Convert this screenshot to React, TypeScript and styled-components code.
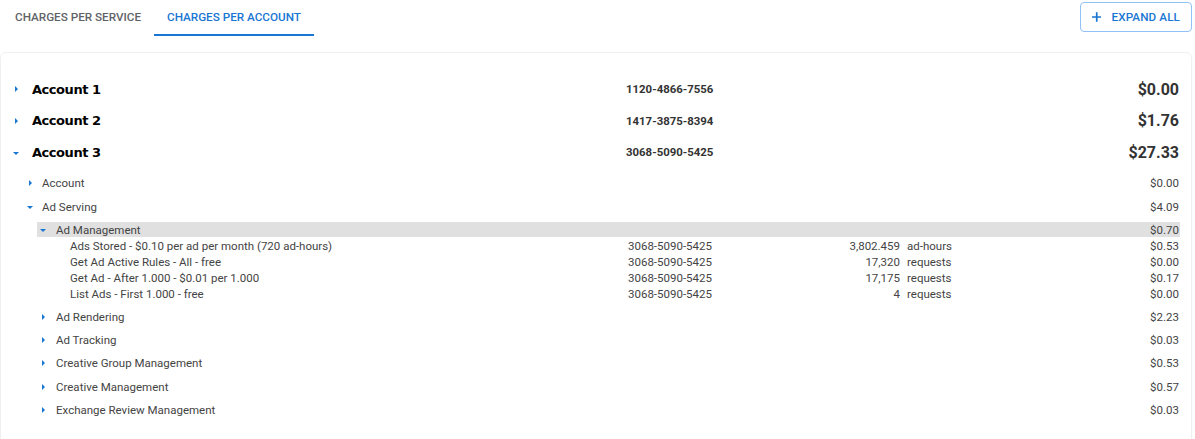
import React from "react";
import styled, { createGlobalStyle } from "styled-components";

const GlobalStyle = createGlobalStyle`
  html, body { margin: 0; padding: 0; background: #fff; }
  body { font-family: Roboto, "Noto Sans", Arial, sans-serif; color: #333; }
  * { box-sizing: border-box; }
`;

const BLUE = "#1976d2";

const Page = styled.div`
  width: 1195px;
  padding-right: 3px;
`;

const Header = styled.div`
  display: flex;
  justify-content: space-between;
  align-items: flex-start;
  height: 36px;
  padding-left: 2px;
`;

const Tabs = styled.div`
  display: flex;
  height: 36px;
`;

const Tab = styled.button<{ $active?: boolean }>`
  all: unset;
  box-sizing: border-box;
  height: 36px;
  padding: 0 13px;
  display: flex;
  align-items: center;
  white-space: nowrap;
  font-family: Roboto, sans-serif;
  font-weight: 500;
  font-size: 11.7px;
  letter-spacing: 0;
  text-transform: uppercase;
  cursor: pointer;
  color: ${(p) => (p.$active ? BLUE : "#5f6368")};
  border-bottom: 2px solid ${(p) => (p.$active ? BLUE : "transparent")};
`;

const ExpandButton = styled.button`
  all: unset;
  box-sizing: border-box;
  margin-top: 2px;
  height: 30px;
  width: 112px;
  display: flex;
  align-items: center;
  gap: 10px;
  padding: 0 11px;
  white-space: nowrap;
  border: 1px solid #90c2f5;
  border-radius: 4px;
  color: ${BLUE};
  font-family: Roboto, sans-serif;
  font-weight: 500;
  font-size: 11.7px;
  letter-spacing: 0.1px;
  cursor: pointer;
`;

const Card = styled.div`
  margin-top: 16px;
  border: 1px solid #f0f0f0;
  border-radius: 6px;
  box-shadow: 0 1px 2px rgba(0, 0, 0, 0.03);
  padding: 20.5px 11px 24px 11px;
`;

const AccountRow = styled.div`
  display: grid;
  grid-template-columns: 20px 594px 1fr auto;
  align-items: center;
  height: 31.5px;
  padding-right: 1px;
`;

const AccountName = styled.div`
  font-family: "DejaVu Sans", Verdana, sans-serif;
  font-weight: 700;
  font-size: 13px;
  letter-spacing: -0.45px;
  color: #000;
`;

const AccountNumber = styled.div`
  font-family: Roboto, sans-serif;
  font-weight: 700;
  font-size: 11.4px;
  color: #333;
`;

const AccountAmount = styled.div`
  font-family: Roboto, sans-serif;
  font-weight: 700;
  font-size: 16px;
  color: #333;
  text-align: right;
`;

const CaretBox = styled.span`
  width: 8px;
  height: 8px;
  display: flex;
  align-items: center;
  justify-content: center;
`;

const Triangle = styled.span<{ $open?: boolean }>`
  width: 0;
  height: 0;
  ${(p) =>
    p.$open
      ? `border-left: 3px solid transparent; border-right: 3px solid transparent; border-top: 3px solid ${BLUE}; margin-top: 2px;`
      : `border-top: 3px solid transparent; border-bottom: 3px solid transparent; border-left: 3px solid ${BLUE};`}
`;

const Children = styled.div<{ $indent: number; $top?: number }>`
  padding-left: ${(p) => p.$indent}px;
  padding-top: ${(p) => p.$top ?? 0}px;
`;

const ServiceRow = styled.div<{ $indent: number; $caretCol: number; $highlight?: boolean; $height?: number }>`
  display: grid;
  grid-template-columns: ${(p) => p.$caretCol}px 1fr auto;
  align-items: center;
  height: ${(p) => p.$height ?? 23.3}px;
  padding-left: ${(p) => p.$indent}px;
  padding-right: 1px;
  background: ${(p) => (p.$highlight ? "#e0e0e0" : "transparent")};
  font-family: Roboto, sans-serif;
  font-size: 11.5px;
  color: #444;
`;

const Amount = styled.div`
  text-align: right;
`;

const Group = styled.div`
  margin: 3px 0 3px;
`;

const ItemList = styled.div`
  padding-top: 1px;
`;

const ItemRow = styled.div`
  display: grid;
  grid-template-columns: 558px 200px 72px 1fr auto;
  align-items: center;
  height: 16px;
  padding-left: 33px;
  padding-right: 1px;
  font-family: Roboto, sans-serif;
  font-size: 11.5px;
  color: #444;
`;

const Qty = styled.div`
  text-align: right;
`;

const Unit = styled.div`
  padding-left: 7px;
`;

const Caret = ({ open }: { open?: boolean }) => (
  <CaretBox>
    <Triangle $open={open} />
  </CaretBox>
);

const PlusIcon = () => (
  <svg width="10" height="10" viewBox="0 0 10 10">
    <path d="M5 0v10M0 5h10" stroke={BLUE} strokeWidth="1.8" fill="none" />
  </svg>
);

const accounts = [
  { name: "Account 1", number: "1120-4866-7556", amount: "$0.00" },
  { name: "Account 2", number: "1417-3875-8394", amount: "$1.76" },
];

const otherServices = [
  { name: "Ad Rendering", amount: "$2.23" },
  { name: "Ad Tracking", amount: "$0.03" },
  { name: "Creative Group Management", amount: "$0.53" },
  { name: "Creative Management", amount: "$0.57" },
  { name: "Exchange Review Management", amount: "$0.03" },
];

const items = [
  { label: "Ads Stored - $0.10 per ad per month (720 ad-hours)", qty: "3,802.459", unit: "ad-hours", amount: "$0.53" },
  { label: "Get Ad Active Rules - All - free", qty: "17,320", unit: "requests", amount: "$0.00" },
  { label: "Get Ad - After 1.000 - $0.01 per 1.000", qty: "17,175", unit: "requests", amount: "$0.17" },
  { label: "List Ads - First 1.000 - free", qty: "4", unit: "requests", amount: "$0.00" },
];

export default function App() {
  return (
    <Page>
      <GlobalStyle />
      <Header>
        <Tabs>
          <Tab>Charges per service</Tab>
          <Tab $active>Charges per account</Tab>
        </Tabs>
        <ExpandButton>
          <PlusIcon />
          EXPAND ALL
        </ExpandButton>
      </Header>
      <Card>
        {accounts.map((a) => (
          <AccountRow key={a.name}>
            <Caret />
            <AccountName>{a.name}</AccountName>
            <AccountNumber>{a.number}</AccountNumber>
            <AccountAmount>{a.amount}</AccountAmount>
          </AccountRow>
        ))}
        <AccountRow>
          <Caret open />
          <AccountName>Account 3</AccountName>
          <AccountNumber>3068-5090-5425</AccountNumber>
          <AccountAmount>$27.33</AccountAmount>
        </AccountRow>
        <Children $indent={0} $top={3.5}>
          <ServiceRow $indent={14} $caretCol={16}>
            <Caret />
            <span>Account</span>
            <Amount>$0.00</Amount>
          </ServiceRow>
          <ServiceRow $indent={14} $caretCol={16} $height={24.3}>
            <Caret open />
            <span>Ad Serving</span>
            <Amount>$4.09</Amount>
          </ServiceRow>
          <Children $indent={25}>
            <Group>
              <ServiceRow $indent={2} $caretCol={17} $highlight $height={15}>
                <Caret open />
                <span>Ad Management</span>
                <Amount>$0.70</Amount>
              </ServiceRow>
              <ItemList>
                {items.map((it) => (
                  <ItemRow key={it.label}>
                    <span>{it.label}</span>
                    <span>3068-5090-5425</span>
                    <Qty>{it.qty}</Qty>
                    <Unit>{it.unit}</Unit>
                    <Amount>{it.amount}</Amount>
                  </ItemRow>
                ))}
              </ItemList>
            </Group>
            {otherServices.map((s) => (
              <ServiceRow key={s.name} $indent={2} $caretCol={17}>
                <Caret />
                <span>{s.name}</span>
                <Amount>{s.amount}</Amount>
              </ServiceRow>
            ))}
          </Children>
        </Children>
      </Card>
    </Page>
  );
}
